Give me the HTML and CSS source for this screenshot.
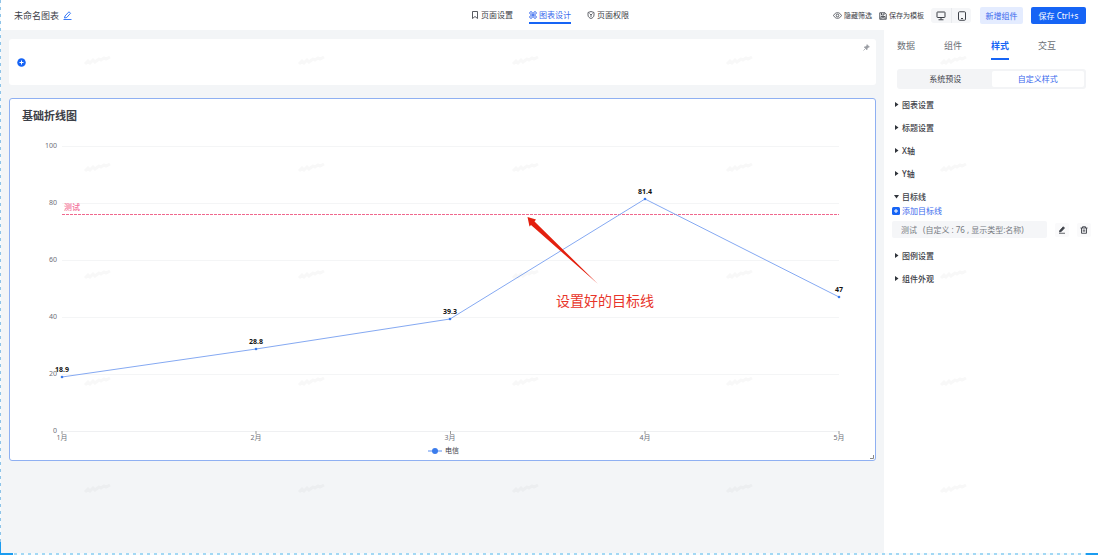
FILE: index.html
```html
<!DOCTYPE html>
<html lang="zh-CN">
<head>
<meta charset="utf-8">
<title>未命名图表</title>
<link rel="stylesheet" href="styles.css">
</head>
<body>
<div class="app">
  <header class="topbar">
    <div class="doc">
      <span class="doc-name">未命名图表</span>
      <button class="icon-btn blue" aria-label="重命名">
        <svg width="9" height="9" viewBox="0 0 18 18" fill="none" stroke="currentColor" stroke-width="1.7"><path d="M3 14l1-4 8-8.500 3 3L7.500 13zM1 17h16"/></svg>
      </button>
    </div>
    <nav class="pages">
      <a href="#settings"><svg width="8" height="8" viewBox="0 0 16 16" fill="none" stroke="currentColor" stroke-width="1.700"><path d="M3 1h10v14l-5-4-5 4z"/></svg>页面设置</a>
      <a href="#design" class="current"><svg width="8" height="8" viewBox="0 0 16 16" fill="none" stroke="currentColor" stroke-width="1.700"><circle cx="4" cy="4" r="2.700"/><circle cx="12" cy="4" r="2.700"/><circle cx="4" cy="12" r="2.700"/><circle cx="12" cy="12" r="2.700"/><path d="M6 6l4 4M10 6l-4 4"/></svg>图表设计</a>
      <a href="#access"><svg width="8" height="8" viewBox="0 0 16 16" fill="none" stroke="currentColor" stroke-width="1.600"><path d="M8 1l6 2v5c0 4-3 6-6 7-3-1-6-3-6-7V3z"/><path d="M5 5l3 3 3-3M8 8v4"/></svg>页面权限</a>
    </nav>
    <div class="actions">
      <button class="text-btn"><svg width="9" height="9" viewBox="0 0 18 18" fill="none" stroke="currentColor" stroke-width="1.600"><path d="M1 9c4-7.500 12-7.500 16 0-4 7.500-12 7.500-16 0z"/><circle cx="9" cy="9" r="2.700"/></svg>隐藏筛选</button>
      <button class="text-btn"><svg width="8" height="8" viewBox="0 0 16 16" fill="none" stroke="currentColor" stroke-width="1.700"><path d="M1.500 1.500H12l2.500 3v10h-13zM5 2v4h5V2M4 14V9h8v5M6 11.500h4"/></svg>保存为模板</button>
      <div class="devices">
        <button class="icon-btn" aria-label="桌面端"><svg width="10" height="10" viewBox="0 0 20 20" fill="none" stroke="currentColor" stroke-width="2"><rect x="2" y="2" width="16" height="11" rx="1"/><path d="M10 13v4M5 17.500h10"/></svg></button>
        <button class="icon-btn" aria-label="平板端"><svg width="10" height="10" viewBox="0 0 20 20" fill="none" stroke="currentColor" stroke-width="2"><rect x="3" y="1.500" width="14" height="17" rx="2"/><path d="M8 15h4"/></svg></button>
      </div>
      <button class="btn soft">新增组件</button>
      <button class="btn primary">保存 Ctrl+s</button>
    </div>
  </header>

  <div class="body">
    <main class="canvas">
      <section class="filter-card">
        <button class="icon-btn blue" aria-label="添加筛选"><svg width="9" height="9" viewBox="0 0 18 18"><circle cx="9" cy="9" r="8.500" fill="currentColor"/><path d="M9 5v8M5 9h8" stroke="#fff" stroke-width="2"/></svg></button>
        <button class="icon-btn pin" aria-label="固定"><svg width="7" height="7" viewBox="0 0 14 14" fill="#9a9da3" stroke="#9a9da3"><path d="M8 1l5 5-2 .5-2.500 2.500-.5 3L2 6l3-.5L7.500 3z"/><path d="M4.500 9.500L1 13" stroke-width="1.500"/></svg></button>
      </section>

      <section class="chart-card">
        <h1>基础折线图</h1>
        <svg class="chart" viewBox="0 0 865 313" role="img" aria-label="基础折线图">
          <path class="grid" d="M52 16.500H829M52 73.500H829M52 130.500H829M52 187.500H829M52 244.500H829"/>
          <path class="axis" d="M52 301.500H829"/>
          <path class="tick" d="M52 301v3M246 301v3M440.500 301v3M635 301v3M829 301v3"/>
          <g class="y-label">
            <text x="47" y="18">100</text><text x="47" y="75">80</text><text x="47" y="132">60</text><text x="47" y="189">40</text><text x="47" y="246">20</text><text x="47" y="303">0</text>
          </g>
          <g class="x-label">
            <text x="52" y="310">1月</text><text x="246" y="310">2月</text><text x="440" y="310">3月</text><text x="635" y="310">4月</text><text x="829" y="310">5月</text>
          </g>
          <path class="target" d="M52 84.500H829"/>
          <text class="target-label" x="54" y="80">测试</text>
          <path class="series" d="M52 247L246 219L440 189L635 69L829 167"/>
          <g class="dots"><circle cx="52" cy="247" r="1.300"/><circle cx="246" cy="219" r="1.300"/><circle cx="440" cy="189" r="1.300"/><circle cx="635" cy="69" r="1.300"/><circle cx="829" cy="167" r="1.300"/></g>
          <g class="value">
            <text x="52" y="242">18.9</text><text x="246" y="214">28.8</text><text x="440" y="184">39.3</text><text x="635" y="64">81.4</text><text x="829" y="162">47</text>
          </g>
          <path class="arrow" d="M517.500 87L526 89.500L524.500 91.500L588 154L521 95L519.500 96.500z"/>
          <text class="note" x="546" y="176">设置好的目标线</text>
        </svg>
        <div class="legend"><svg width="14" height="8" viewBox="0 0 14 8"><path d="M0 4h14" stroke="#5b8ff0"/><circle cx="7" cy="4" r="3" fill="#3b7cec"/></svg>电信</div>
        <svg class="resize" width="4" height="4" viewBox="0 0 4 4"><path d="M3.500 0v3.500H0" fill="none" stroke="#888"/></svg>
      </section>
    </main>

    <aside class="panel">
      <nav class="tabs">
        <a href="#data">数据</a><a href="#widget">组件</a><a href="#style" class="current">样式</a><a href="#interaction">交互</a>
      </nav>
      <div class="segment">
        <button>系统预设</button><button class="on">自定义样式</button>
      </div>
      <div class="groups">
        <button class="group">图表设置</button>
        <button class="group">标题设置</button>
        <button class="group">X轴</button>
        <button class="group">Y轴</button>
        <button class="group open" aria-expanded="true">目标线</button>
        <div class="targets">
          <button class="add"><svg width="8" height="8" viewBox="0 0 16 16"><rect width="16" height="16" rx="3" fill="#1664f5"/><path d="M8 4v8M4 8h8" stroke="#fff" stroke-width="2"/></svg>添加目标线</button>
          <div class="target-row">
            <div class="target-item"><span>测试</span><span>(自定义 : 76 , 显示类型:名称)</span></div>
            <button class="icon-btn tile" aria-label="编辑"><svg width="8" height="8" viewBox="0 0 16 16" fill="none" stroke="currentColor" stroke-width="1.600"><path d="M3 12l1-3.500 6.500-7L13 4l-6.500 7z" fill="currentColor"/><path d="M2 14.500h12"/></svg></button>
            <button class="icon-btn tile" aria-label="删除"><svg width="8" height="8" viewBox="0 0 16 16" fill="none" stroke="currentColor" stroke-width="1.800"><path d="M1 4h14M5 4V1.500h6V4M3 4v10.500h10V4M6.500 7v4.500M9.500 7v4.500"/></svg></button>
          </div>
        </div>
        <button class="group">图例设置</button>
        <button class="group">组件外观</button>
      </div>
    </aside>
  </div>

  <svg class="watermark" aria-hidden="true">
    <defs><pattern id="mark" width="214" height="107" patternUnits="userSpaceOnUse" patternTransform="translate(-10 8)">
      <path d="M95 56l3-3 2 2 3-3 2 2 4-3 2 1 3-2 2 1 4-2" fill="none" stroke="#555" stroke-width="3" opacity=".04"/>
    </pattern></defs>
    <rect width="100%" height="100%" fill="url(#mark)"/>
  </svg>
  <div class="frame" aria-hidden="true"></div>
</div>
</body>
</html>
```

FILE: styles.css
```css
* { box-sizing: border-box; }

body {
  margin: 0;
  color: #3c4047;
  font: 8px/12px "Noto Sans", "Noto Sans CJK SC", sans-serif;
}

button {
  display: flex;
  align-items: center;
  margin: 0;
  padding: 0;
  border: 0;
  background: none;
  color: inherit;
  font: inherit;
  white-space: nowrap;
}

a { color: inherit; text-decoration: none; }
svg { flex: none; display: block; }

.app {
  position: relative;
  display: flex;
  flex-direction: column;
  min-height: 100vh;
  background: #f3f5f7;
}

.topbar {
  display: grid;
  grid-template-columns: 1fr auto 1fr;
  align-items: center;
  height: 30px;
  padding: 1px 12px 0 14px;
  background: #fff;
}

.doc { display: flex; align-items: center; gap: 4px; font-size: 9px; }
.icon-btn { justify-content: center; }
.blue { color: #1664f5; }

.pages { display: flex; gap: 16px; }
.pages a {
  display: flex;
  align-items: center;
  gap: 2px;
  padding: 2px 0 1px;
  border-bottom: 2px solid transparent;
}
.pages .current { color: #3969ed; border-color: #1664f5; }

.actions { display: flex; align-items: center; justify-content: flex-end; }
.text-btn { gap: 2px; margin-right: 7px; font-size: 7px; }
.devices {
  display: flex;
  height: 15px;
  margin-right: 9px;
  border-radius: 3px;
  background: #f5f6f8;
}
.devices .icon-btn { width: 20px; }
.devices .icon-btn + .icon-btn { border-left: 1px solid #e8eaed; }
.btn { justify-content: center; height: 17px; border-radius: 2px; }
.soft { width: 43px; margin-right: 8px; background: #e4ecff; color: #3969ed; }
.primary { width: 55px; background: #1664f5; color: #fff; }

.body { display: flex; flex: 1; }

.canvas {
  display: flex;
  flex: 1;
  flex-direction: column;
  gap: 13px;
  min-width: 0;
  padding: 9px 8px 9px 9px;
}

.filter-card {
  display: flex;
  align-items: center;
  justify-content: space-between;
  height: 46px;
  padding: 0 6px 0 8px;
  border-radius: 3px;
  background: #fff;
}
.pin { align-self: flex-start; padding-top: 5px; }

.chart-card {
  position: relative;
  border: 1px solid #8fb0f2;
  border-radius: 3px;
  background: #fff;
}
.chart-card h1 {
  margin: 0;
  padding: 8px 12px 5px;
  font-size: 11px;
  font-weight: 600;
  line-height: 18px;
}
.chart { width: 100%; }
.grid { stroke: #f4f5f6; }
.axis { stroke: #eff0f2; }
.tick { stroke: #999; }
.grid, .axis, .tick, .series, .target { fill: none; }
.y-label { fill: #6e7079; font-size: 7px; text-anchor: end; }
.x-label { fill: #6e7079; font-size: 7px; text-anchor: middle; }
.target { stroke: #f0688e; stroke-dasharray: 3 1; }
.target-label { fill: #f4729b; font-size: 8px; font-weight: 500; }
.series { stroke: #85a9f2; }
.dots { fill: #3b7cec; }
.value { fill: #111; font-size: 7px; font-weight: 700; text-anchor: middle; }
.arrow { fill: #e3200f; }
.note { fill: #e8352a; font-size: 14px; }
.legend {
  display: flex;
  align-items: center;
  justify-content: center;
  gap: 3px;
  height: 17px;
  padding: 0 0 1px 2px;
  font-size: 7px;
}
.resize { position: absolute; right: 1px; bottom: 1px; }

.panel { width: 214px; padding: 0 12px 0 13px; background: #fff; }
.tabs { display: flex; gap: 29px; color: #6b6f76; font-size: 9px; }
.tabs a { padding: 10px 0 6px; border-bottom: 2px solid transparent; }
.tabs .current { color: #1664f5; border-color: #1664f5; font-weight: 700; }

.segment {
  display: grid;
  grid-template-columns: 1fr 1fr;
  height: 20px;
  margin-top: 9px;
  padding: 2px;
  border-radius: 3px;
  background: #f3f4f6;
}
.segment button { justify-content: center; border-radius: 2px; }
.segment .on { background: #fff; color: #3969ed; }

.groups { padding-top: 4px; }
.group { gap: 3px; width: 100%; height: 23px; font-weight: 500; }
.group::before {
  content: "";
  width: 5px;
  height: 5px;
  margin-left: -3px;
  background: #30343b;
  clip-path: polygon(20% 0, 90% 50%, 20% 100%);
}
.group.open::before { clip-path: polygon(0 20%, 100% 20%, 50% 90%); }

.targets { margin: -3px -5px 6px; }
.add { gap: 2px; height: 12px; color: #3969ed; }
.target-row { display: flex; align-items: center; gap: 8px; margin-top: 4px; }
.target-item {
  display: flex;
  flex: 1;
  gap: 6px;
  height: 17px;
  padding: 0 9px;
  border-radius: 2px;
  background: #f5f6f8;
  color: #777b82;
  line-height: 17px;
  white-space: nowrap;
}
.tile { width: 14px; height: 14px; border-radius: 2px; background: #fafafb; }

.watermark {
  position: absolute;
  inset: 0;
  width: 100%;
  height: 100%;
  pointer-events: none;
}

.frame {
  position: absolute;
  inset: 0;
  pointer-events: none;
  background:
    linear-gradient(#1b9cf0, #1b9cf0) left bottom / 13px 2px no-repeat,
    linear-gradient(#1b9cf0, #1b9cf0) left bottom / 1px 13px no-repeat,
    linear-gradient(#1b9cf0, #1b9cf0) right bottom / 12px 2px no-repeat,
    repeating-linear-gradient(90deg, #a3d8f4 0 3px, #f6fbfe 3px 7px) left bottom / 100% 2px no-repeat,
    repeating-linear-gradient(#8fc4e8 0 3px, #f6fbfe 3px 7px) left top / 1px 100% no-repeat;
}
```
